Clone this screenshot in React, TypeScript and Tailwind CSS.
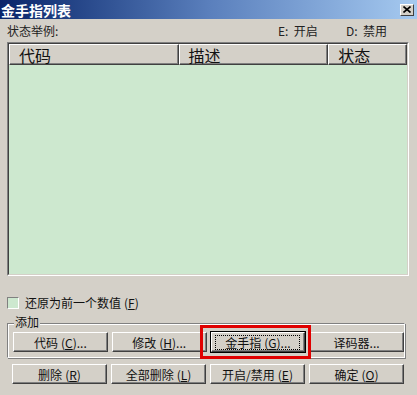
import type { ReactNode } from "react";

const font = { fontFamily: '"Noto Sans CJK SC", "Liberation Sans", sans-serif' };

function Key({ k }: { k: string }) {
  return (
    <span className="ml-[3px]">
      (<span className="underline">{k}</span>)
    </span>
  );
}

function Btn({
  children,
  focused,
}: {
  children: ReactNode;
  focused?: boolean;
}) {
  return (
    <div
      className={
        "w-[95px] h-[20px] flex items-center justify-center text-[12px] text-[#111] bg-[#d4d0c8] border border-t-white border-l-white border-b-[#404040] border-r-[#404040] shadow-[inset_-1px_-1px_0_#808080] " +
        (focused ? "outline outline-1 outline-black" : "")
      }
    >
      {focused ? (
        <span className="px-[3px] border border-dotted border-black leading-[13px] w-[85px] text-center">
          {children}
        </span>
      ) : (
        <span className="leading-[13px]">{children}</span>
      )}
    </div>
  );
}

function HeaderCell({ label, w }: { label: string; w?: string }) {
  return (
    <div
      className={
        "h-full flex items-center pl-[9px] text-[16px] text-[#111] border border-t-white border-l-white border-b-[#404040] border-r-[#404040] shadow-[inset_-1px_-1px_0_#808080] " +
        (w ?? "flex-1")
      }
    >
      {label}
    </div>
  );
}

export default function App() {
  return (
    <div className="w-[417px] h-[395px] bg-[#d4d0c8] flex flex-col relative overflow-hidden" style={font}>
      {/* title bar */}
      <div className="h-[19px] flex items-center justify-between bg-gradient-to-r from-[#0a246a] via-[#5a7fbc] to-[#a6caf0] pl-[1px] pr-[3px]">
        <span className="text-white font-bold text-[14px] leading-none">金手指列表</span>
        <div className="w-[14px] h-[12px] bg-[#d4d0c8] border border-t-white border-l-white border-b-[#404040] border-r-[#404040] flex items-center justify-center">
          <svg width="8" height="7" viewBox="0 0 8 7">
            <path d="M0.5 0.5 L7.5 6.5 M7.5 0.5 L0.5 6.5" stroke="#000" strokeWidth="1.6" />
          </svg>
        </div>
      </div>

      <div className="flex-1 flex flex-col px-[7px]">
        <div className="h-[23px] flex items-center justify-between text-[12px] text-[#222] pt-[1px]">
          <span>状态举例:</span>
          <div className="flex">
            <span className="w-[68px]">E:&nbsp;&nbsp;开启</span>
            <span className="w-[64px]">D:&nbsp;&nbsp;禁用</span>
          </div>
        </div>

        {/* list view */}
        <div className="h-[234px] w-[402px] flex flex-col border border-t-[#808080] border-l-[#808080] border-b-white border-r-white">
          <div className="flex-1 flex flex-col border border-t-[#404040] border-l-[#404040] border-b-[#d4d0c8] border-r-[#d4d0c8]">
            <div className="h-[21px] flex">
              <HeaderCell label="代码" w="w-[170px]" />
              <HeaderCell label="描述" w="w-[150px]" />
              <HeaderCell label="状态" w="w-[79px]" />
            </div>
            <div className="flex-1 bg-[#cde8cf]" />
          </div>
        </div>

        {/* checkbox */}
        <div className="mt-[18px] h-[17px] flex items-center gap-[6px] text-[12px] text-[#111]">
          <div className="w-[12px] h-[12px] bg-[#cde8cf] border border-t-[#808080] border-l-[#808080] border-b-white border-r-white" />
          <span>
            还原为前一个数值<Key k="F" />
          </span>
        </div>

        {/* group box */}
        <div className="relative mt-[12px] w-[398px] h-[35px] border border-t-[#808080] border-l-[#808080] border-b-white border-r-white shadow-[inset_1px_1px_0_#fff,1px_1px_0_#808080]">
          <span className="absolute -top-[9px] left-[6px] px-[1px] bg-[#d4d0c8] text-[12px] leading-[14px] text-[#111]">
            添加
          </span>
          <div className="flex gap-[4px] pl-[5px] pt-[8px]">
            <Btn>
              代码<Key k="C" />...
            </Btn>
            <Btn>
              修改<Key k="H" />...
            </Btn>
            <Btn focused>
              金手指<Key k="G" />...
            </Btn>
            <Btn>译码器...</Btn>
          </div>
        </div>

        <div className="flex gap-[4px] pl-[5px] mt-[6px]">
          <Btn>
            删除<Key k="R" />
          </Btn>
          <Btn>
            全部删除<Key k="L" />
          </Btn>
          <Btn>
            开启/禁用<Key k="E" />
          </Btn>
          <Btn>
            确定<Key k="O" />
          </Btn>
        </div>
      </div>

      {/* red highlight */}
      <div className="absolute left-[200px] top-[325px] w-[111px] h-[34px] border-[3px] border-[#e00000]" />
    </div>
  );
}
